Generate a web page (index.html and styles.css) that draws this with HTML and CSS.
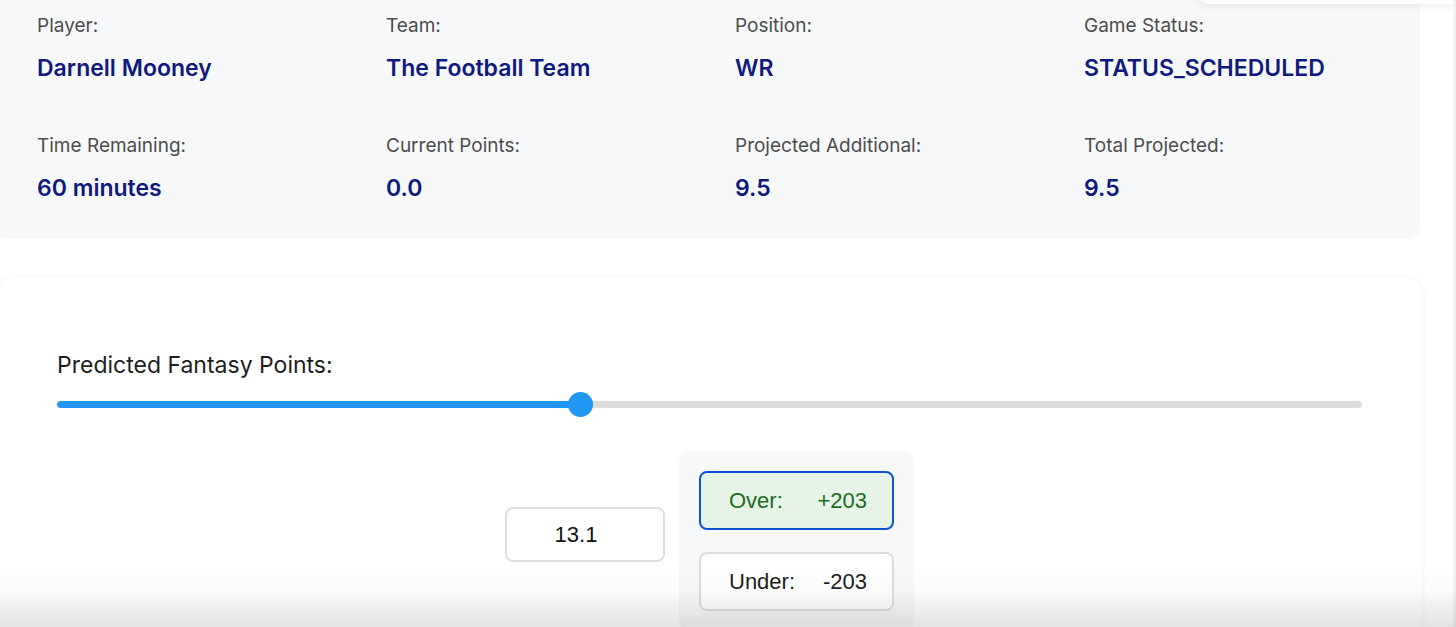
FILE: index.html
```html
<!DOCTYPE html>
<html lang="en">
<head>
<meta charset="utf-8">
<title>Player Prediction</title>
<link rel="stylesheet" href="styles.css">
</head>
<body>
<div class="page">
  <section class="summary">
    <div class="stat"><div class="label">Player:</div><div class="value">Darnell Mooney</div></div>
    <div class="stat"><div class="label">Team:</div><div class="value">The Football Team</div></div>
    <div class="stat"><div class="label">Position:</div><div class="value">WR</div></div>
    <div class="stat"><div class="label">Game Status:</div><div class="value">STATUS_SCHEDULED</div></div>
    <div class="stat"><div class="label">Time Remaining:</div><div class="value">60 minutes</div></div>
    <div class="stat"><div class="label">Current Points:</div><div class="value">0.0</div></div>
    <div class="stat"><div class="label">Projected Additional:</div><div class="value">9.5</div></div>
    <div class="stat"><div class="label">Total Projected:</div><div class="value">9.5</div></div>
  </section>

  <section class="predict">
    <div class="predict-label">Predicted Fantasy Points:</div>
    <div class="slider">
      <div class="track"><div class="fill" style="width: 40.08%"></div></div>
      <div class="thumb" style="left: 40.08%"></div>
    </div>
    <div class="bet-row">
      <div class="points-input">13.1</div>
      <div class="odds">
        <div class="odd odd-over"><span>Over:</span><span>+203</span></div>
        <div class="odd odd-under"><span>Under:</span><span>-203</span></div>
      </div>
    </div>
  </section>
</div>
<div class="popover"></div>
<div class="edge-line"></div>
<div class="bottom-fade"></div>
</body>
</html>
```

FILE: styles.css
```css
* { box-sizing: border-box; }
html, body { margin: 0; padding: 0; }
body {
  background: #ffffff;
  font-family: "Inter", "Noto Sans", sans-serif;
  width: 1456px;
  height: 627px;
  overflow: hidden;
  position: relative;
}
.page {
  display: flex;
  flex-direction: column;
}
.summary {
  margin: -13px 36px 0 -7px;
  padding: 28px 0 37px 44px;
  background: #f7f8fa;
  border-radius: 12px;
  display: grid;
  grid-template-columns: repeat(4, 349px);
  row-gap: 53px;
}
.stat {
  display: flex;
  flex-direction: column;
  gap: 17px;
}
.label {
  font-size: 19px;
  line-height: 22px;
  color: #4d4d4d;
}
.value {
  font-size: 23px;
  line-height: 28px;
  font-weight: 600;
  color: #101a7e;
}
.predict {
  margin: 39px 35px 0 -2px;
  padding: 75px 59px 0 59px;
  background: #ffffff;
  border-radius: 14px;
  box-shadow: 0 1px 8px rgba(0, 0, 0, 0.06);
  height: 400px;
}
.predict-label {
  font-size: 23px;
  line-height: 24px;
  font-weight: 400;
  color: #1e1e1e;
}
.slider {
  position: relative;
  height: 25px;
  margin-top: 15px;
  display: flex;
  align-items: center;
}
.track {
  width: 100%;
  height: 7px;
  border-radius: 4px;
  background: #dddddd;
  overflow: hidden;
}
.fill {
  height: 100%;
  background: #2196f3;
  border-radius: 4px;
}
.thumb {
  position: absolute;
  top: 0;
  width: 25px;
  height: 25px;
  margin-left: -12px;
  border-radius: 50%;
  background: #2196f3;
}
.bet-row {
  margin-top: 34px;
  display: flex;
  justify-content: center;
  align-items: flex-start;
  gap: 14px;
}
.points-input {
  margin-top: 56px;
  width: 160px;
  height: 55px;
  border: 2px solid #dddddd;
  border-radius: 8px;
  display: flex;
  align-items: center;
  justify-content: center;
  padding-right: 18px;
  font-family: "Liberation Sans", Arial, sans-serif;
  font-size: 22px;
  color: #111111;
}
.odds {
  width: 235px;
  padding: 20px;
  background: #f7f8fa;
  border-radius: 10px;
  display: flex;
  flex-direction: column;
  gap: 22px;
}
.odd {
  height: 59px;
  border: 2px solid #dddddd;
  border-radius: 8px;
  background: #ffffff;
  display: flex;
  align-items: center;
  justify-content: space-between;
  padding: 0 25px 0 28px;
  font-family: "Liberation Sans", Arial, sans-serif;
  font-size: 22px;
  color: #1e1e1e;
}
.odd-over {
  border-color: #0d52d4;
  background: #e6f4e7;
  color: #1a6e1c;
}
.popover {
  position: absolute;
  top: -30px;
  left: 1197px;
  width: 300px;
  height: 34px;
  background: #ffffff;
  border-radius: 12px;
  box-shadow: 0 2px 10px rgba(0, 0, 0, 0.08);
}
.edge-line {
  position: absolute;
  top: 0;
  right: 0;
  width: 3px;
  height: 627px;
  background: linear-gradient(to right, #f6f6f6, #ececec);
}
.bottom-fade {
  position: absolute;
  left: 0;
  right: 0;
  bottom: 0;
  height: 62px;
  background: linear-gradient(to bottom, rgba(0, 0, 0, 0), rgba(0, 0, 0, 0.015) 40%, rgba(0, 0, 0, 0.11));
  pointer-events: none;
}
```
